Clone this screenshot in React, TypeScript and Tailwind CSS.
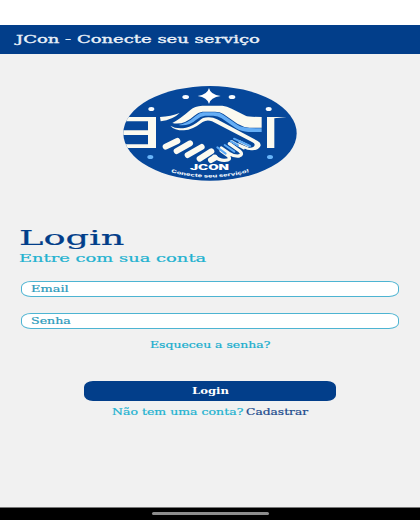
import { useLayoutEffect, useRef, useState } from "react";

type WideProps = { text: string; width: number; className?: string };

// Text whose glyphs are widened to fill the given width.
function Wide({ text, width, className = "" }: WideProps) {
  const ref = useRef<HTMLSpanElement>(null);
  const [scale, setScale] = useState(1);
  useLayoutEffect(() => {
    if (ref.current) setScale(width / ref.current.offsetWidth);
  }, [width, text]);
  return (
    <span className={`block shrink-0 text-left whitespace-nowrap ${className}`} style={{ width }}>
      <span ref={ref} className="inline-block origin-left" style={{ transform: `scaleX(${scale})` }}>
        {text}
      </span>
    </span>
  );
}

function Logo() {
  return (
    <svg viewBox="0 0 570 330" className="h-[110px] w-[190px]" aria-label="JCon">
      <defs>
        <clipPath id="oval">
          <ellipse cx="285" cy="160" rx="260" ry="142" />
        </clipPath>
        <path id="curve" d="M168 277 Q285 309 408 275" />
      </defs>
      <ellipse cx="285" cy="160" rx="260" ry="142" fill="#06479a" />
      <g clipPath="url(#oval)">
        <path d="M10 111H123V204H10V193H99V165H10V151H99V124H10Z" fill="#fbfaf0" />
        <path d="M456 111H515L478 115V204H456Z" fill="#fbfaf0" />
      </g>
      <path d="M282 24Q286 44 317 48Q286 52 282 72Q277 52 248 48Q277 44 282 24Z" fill="#fff" />
      <g fill="#f7fbff">
        <ellipse cx="212" cy="51" rx="10" ry="6" />
        <ellipse cx="351" cy="51" rx="10" ry="6" />
        <ellipse cx="109" cy="87" rx="9" ry="6" />
        <ellipse cx="461" cy="87" rx="9" ry="6" />
      </g>
      <g fill="#69b5fa">
        <ellipse cx="106" cy="231" rx="9" ry="6" />
        <ellipse cx="465" cy="231" rx="9" ry="6" />
      </g>
      <path d="M135 111Q168 110 194 99Q174 119 137 124Z" fill="#fbfaf0" />
      <path d="M172 129Q195 117 226 90Q239 78 262 77H322Q336 78 350 86L392 107Q399 111 440 111V143H403Q386 142 367 131L325 102Q315 95 300 95H262Q250 96 238 107Q205 137 172 129Z" fill="#fbfaf0" />
      <path d="M190 135Q215 132 241 109Q253 98 264 97H300Q314 97 324 104L367 134Q382 145 440 145V156H400Q379 155 363 145L320 115Q309 107 295 107H270Q256 108 244 119Q220 140 190 135Z" fill="#65aef5" />
      <path d="M166 137Q184 148 213 143Q232 139 253 122Q263 111 282 112Q295 112 306 118L428 183Q440 190 436 199Q428 214 403 210Q393 209 365 194L370 190L402 203Q417 204 419 195Q420 190 411 186L291 124Q276 118 263 126Q232 150 207 151Q177 151 166 137Z" fill="#fbfaf0" />
      <path d="M343 191L374 213Q386 223 372 228Q358 230 342 220L319 204M318 212L340 228Q350 241 329 241Q315 242 297 229" fill="none" stroke="#fbfaf0" strokeWidth="10" strokeLinecap="round" />
      <path d="M373 184L399 197M350 184L386 205" fill="none" stroke="#fbfaf0" strokeWidth="7" strokeLinecap="round" />
      <path d="M357 176L405 198M347 183L369 196M329 195L358 215M307 202L332 221" fill="none" stroke="#5ba9f5" strokeWidth="6" strokeLinecap="round" />
      <g stroke="#fbfaf0" strokeLinecap="round" strokeWidth="18">
        <path d="M152 200L187 183" />
        <path d="M185 213L225 190" />
        <path d="M218 225L260 201" />
        <path d="M254 236L289 214" />
        <path d="M288 240L300 233" />
      </g>
      <text x="225" y="269" textLength="117" lengthAdjust="spacingAndGlyphs" fontSize="21" fontWeight="900" fontFamily="Inter, sans-serif" fill="#fff">JCON</text>
      <text fontSize="14" fontWeight="800" fontFamily="Inter, sans-serif" fill="#eef5fc">
        <textPath href="#curve" textLength="238" lengthAdjust="spacingAndGlyphs">Conecte seu serviço!</textPath>
      </text>
    </svg>
  );
}

function Field({ label, width }: { label: string; width: number }) {
  return (
    <div className="flex h-4 items-center rounded-[10px/6px] border border-[#4db4d2] bg-white pl-[9px] text-[8.5px] leading-none text-[#2a9abb]">
      <Wide text={label} width={width} />
    </div>
  );
}

export default function App() {
  return (
    <div className="flex h-[520px] w-[420px] flex-col overflow-hidden bg-[#f1f1f1] font-['DejaVu_Serif',serif] [-webkit-text-stroke-width:0.2px]">
      <div className="h-[25px] shrink-0 bg-white" />
      <header className="flex h-[29px] shrink-0 items-center bg-[#023e8a] pl-4 text-[11.5px] leading-none text-[#e9f0f8] [-webkit-text-stroke-width:0.35px]">
        <Wide text="JCon - Conecte seu serviço" width={244} />
      </header>
      <main className="flex flex-1 flex-col">
        <div className="mt-[26px] ml-[115px] h-[110px] [-webkit-text-stroke-width:0px]">
          <Logo />
        </div>
        <section className="mt-[36px] pr-[21px] pl-[21px]">
          <h1 className="-ml-[2px] text-[21px] leading-[24px] text-[#023e8a]">
            <Wide text="Login" width={105} />
          </h1>
          <h2 className="mt-[2px] -ml-[2px] text-[11px] leading-[13px] text-[#22b2d0]">
            <Wide text="Entre com sua conta" width={187} />
          </h2>
          <div className="mt-[16px] flex flex-col gap-4">
            <Field label="Email" width={38} />
            <Field label="Senha" width={40} />
          </div>
        </section>
        <a className="mt-[10px] self-center text-[8.5px] leading-3 text-[#16adcd]">
          <Wide text="Esqueceu a senha?" width={120} />
        </a>
        <button className="mt-[30px] flex h-[20px] w-[252px] items-center justify-center self-center rounded-[9px/6px] bg-[#023e8a] text-[8.5px] leading-none font-bold text-white [-webkit-text-stroke-width:0px]">
          <Wide text="Login" width={37} />
        </button>
        <p className="mt-[5px] flex gap-[3px] self-center text-[8.5px] leading-3">
          <Wide text="Não tem uma conta?" width={131} className="text-[#22b2d0]" />
          <Wide text="Cadastrar" width={62} className="text-[#1b4a8c]" />
        </p>
      </main>
      <footer className="flex h-[13px] shrink-0 justify-center border-t border-[#777] bg-black pt-[4px]">
        <div className="h-[3px] w-[117px] rounded-full bg-[#8c8c8c]" />
      </footer>
    </div>
  );
}
